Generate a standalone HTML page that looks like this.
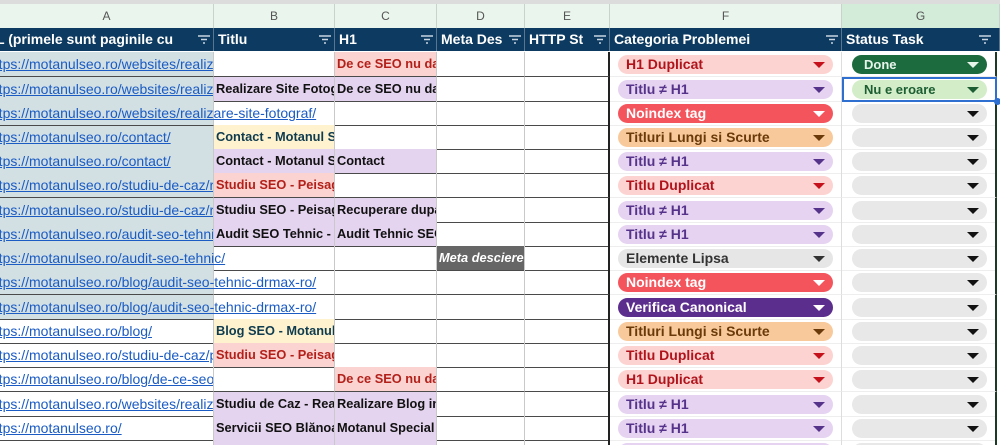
<!DOCTYPE html>
<html><head><meta charset="utf-8"><style>
*{margin:0;padding:0;box-sizing:border-box}
html,body{width:1000px;height:445px;overflow:hidden}
body{background:#fff;font-family:"Liberation Sans",sans-serif;position:relative}
.top{position:absolute;left:0;top:0;width:1000px;height:4px;background:#dcdcdc}
.let{position:absolute;top:4px;height:24px;background:#eaf5ed;border-right:1px solid #c8d3cb;color:#555;font-size:12px;text-align:center;line-height:24px}
.hd{position:absolute;top:28px;height:23px;background:#0d3a60;color:#fff;font-weight:bold;font-size:14px;line-height:23px;padding-left:4px;white-space:nowrap;overflow:hidden;border-right:1px solid #5a7590}
.flt{position:absolute;right:3px;top:7px;width:12px;height:9px}
.r{position:absolute;left:0;width:1000px;height:25px}
.c{position:absolute;top:0;height:25px;border-bottom:1px solid #4a4a4a;border-right:1px solid #c9c9c9;white-space:nowrap;overflow:hidden;font-size:12.8px;font-weight:bold;line-height:24px;padding-left:2px}
.a{left:0;width:214px;font-weight:normal;font-size:14px;color:#1a5bc4;text-decoration:underline;padding-left:0;text-indent:-13px}
.ov{overflow:visible;z-index:2}
.b{left:214px;width:121px}.cc{left:335px;width:102px}.d{left:437px;width:88px}.e{left:525px;width:85px;border-right:2px solid #222}
.f{left:610px;width:232px;border-bottom:1px solid #eee;border-right:1px solid #ddd}
.g{left:842px;width:155px;border-bottom:1px solid #eee;border-right:2px solid #1d3a26}
.t{background:#d2e0e4}
.pu{background:#e5d4f0;color:#111}.pk{background:#fbd4d2;color:#b3201a}.ye{background:#fff3cf;color:#0f3b4f}
.ch{position:absolute;left:8px;top:3px;width:215px;height:19px;border-radius:10px;font-size:14px;font-weight:bold;line-height:19px;padding-left:8px}
.gc{position:absolute;left:10px;top:3px;width:135px;height:19px;border-radius:10px;font-size:13px;font-weight:bold;line-height:19px;padding-left:12px;background:#e8e8e8}
.ch i,.gc i{position:absolute;right:8px;top:7px;width:0;height:0;border-left:6px solid transparent;border-right:6px solid transparent;border-top:6px solid currentColor}
.gc i{color:#111}
.h1d{background:#fcd3d0;color:#b1131c}.h1d i{color:#c4111b}
.tn{background:#e5d3f1;color:#56338a}
.no{background:#f4555d;color:#fff}
.tl{background:#f8c99a;color:#6b3a0b}
.el{background:#e6e6e6;color:#333}
.vc{background:#5b2d8c;color:#fff}
</style></head><body>
<div class="top"></div>
<div class="let" style="left:0;width:214px">A</div>
<div class="let" style="left:214px;width:121px">B</div>
<div class="let" style="left:335px;width:102px">C</div>
<div class="let" style="left:437px;width:88px">D</div>
<div class="let" style="left:525px;width:85px">E</div>
<div class="let" style="left:610px;width:232px">F</div>
<div class="let" style="left:842px;width:158px;background:#d3ecd9">G</div>

<div class="hd" style="left:0;width:214px;text-indent:-8px">L (primele sunt paginile cu<svg class="flt" viewBox="0 0 12 9"><path d="M0 1h12M3 4.5h6M5 8h2" stroke="#c8d4e0" stroke-width="1.5"/></svg></div>
<div class="hd" style="left:214px;width:121px">Titlu<svg class="flt" viewBox="0 0 12 9"><path d="M0 1h12M3 4.5h6M5 8h2" stroke="#c8d4e0" stroke-width="1.5"/></svg></div>
<div class="hd" style="left:335px;width:102px">H1<svg class="flt" viewBox="0 0 12 9"><path d="M0 1h12M3 4.5h6M5 8h2" stroke="#c8d4e0" stroke-width="1.5"/></svg></div>
<div class="hd" style="left:437px;width:88px">Meta Des<svg class="flt" style="background:#0d3a60" viewBox="0 0 12 9"><path d="M0 1h12M3 4.5h6M5 8h2" stroke="#c8d4e0" stroke-width="1.5"/></svg></div>
<div class="hd" style="left:525px;width:85px">HTTP St<svg class="flt" style="background:#0d3a60" viewBox="0 0 12 9"><path d="M0 1h12M3 4.5h6M5 8h2" stroke="#c8d4e0" stroke-width="1.5"/></svg></div>
<div class="hd" style="left:610px;width:232px">Categoria Problemei<svg class="flt" viewBox="0 0 12 9"><path d="M0 1h12M3 4.5h6M5 8h2" stroke="#c8d4e0" stroke-width="1.5"/></svg></div>
<div class="hd" style="left:842px;width:158px">Status Task<svg class="flt" style="right:8px" viewBox="0 0 12 9"><path d="M0 1h12M3 4.5h6M5 8h2" stroke="#c8d4e0" stroke-width="1.5"/></svg></div>

<div class="r" style="top:52px"><div class="c a t">https://motanulseo.ro/websites/realizare-site</div><div class="c b"></div><div class="c cc pk">De ce SEO nu da</div><div class="c d"></div><div class="c e"></div><div class="c f"><div class="ch h1d">H1 Duplicat<i></i></div></div><div class="c g"><div class="gc" style="background:#1c6b3e;color:#e6f4ea">Done<i style="color:#e6f4ea"></i></div></div></div>
<div class="r" style="top:77px"><div class="c a t">https://motanulseo.ro/websites/realizare-site</div><div class="c b pu">Realizare Site Fotograf</div><div class="c cc pu">De ce SEO nu da</div><div class="c d"></div><div class="c e"></div><div class="c f"><div class="ch tn">Titlu ≠ H1<i></i></div></div><div class="c g" style="border:2px solid #2f6fd0;border-right:2px solid #2f6fd0"><div class="gc" style="background:#d3edc8;color:#1c5e32;left:8px;top:1px">Nu e eroare<i style="color:#1c5e32"></i></div></div></div>
<div class="r" style="top:101px"><div class="c a t ov">https://motanulseo.ro/websites/realizare-site-fotograf/</div><div class="c b" style="background:none"></div><div class="c cc"></div><div class="c d"></div><div class="c e"></div><div class="c f"><div class="ch no">Noindex tag<i></i></div></div><div class="c g"><div class="gc"><i></i></div></div></div>
<div class="r" style="top:125px"><div class="c a t">https://motanulseo.ro/contact/</div><div class="c b ye">Contact - Motanul SEO</div><div class="c cc"></div><div class="c d"></div><div class="c e"></div><div class="c f"><div class="ch tl">Titluri Lungi si Scurte<i></i></div></div><div class="c g"><div class="gc"><i></i></div></div></div>
<div class="r" style="top:149px"><div class="c a t">https://motanulseo.ro/contact/</div><div class="c b pu">Contact - Motanul SEO</div><div class="c cc pu">Contact</div><div class="c d"></div><div class="c e"></div><div class="c f"><div class="ch tn">Titlu ≠ H1<i></i></div></div><div class="c g"><div class="gc"><i></i></div></div></div>
<div class="r" style="top:173px"><div class="c a t">https://motanulseo.ro/studiu-de-caz/recuperare</div><div class="c b pk">Studiu SEO - Peisagist</div><div class="c cc"></div><div class="c d"></div><div class="c e"></div><div class="c f"><div class="ch h1d">Titlu Duplicat<i></i></div></div><div class="c g"><div class="gc"><i></i></div></div></div>
<div class="r" style="top:198px"><div class="c a t">https://motanulseo.ro/studiu-de-caz/recuperare</div><div class="c b pu">Studiu SEO - Peisagist</div><div class="c cc pu">Recuperare dupa</div><div class="c d"></div><div class="c e"></div><div class="c f"><div class="ch tn">Titlu ≠ H1<i></i></div></div><div class="c g"><div class="gc"><i></i></div></div></div>
<div class="r" style="top:222px"><div class="c a t">https://motanulseo.ro/audit-seo-tehnic-drmax</div><div class="c b pu">Audit SEO Tehnic - Blog</div><div class="c cc pu">Audit Tehnic SEO</div><div class="c d"></div><div class="c e"></div><div class="c f"><div class="ch tn">Titlu ≠ H1<i></i></div></div><div class="c g"><div class="gc"><i></i></div></div></div>
<div class="r" style="top:246px"><div class="c a t ov">https://motanulseo.ro/audit-seo-tehnic/</div><div class="c b" style="background:none"></div><div class="c cc"></div><div class="c d" style="background:#666;color:#fff;font-style:italic">Meta desciere</div><div class="c e"></div><div class="c f"><div class="ch el">Elemente Lipsa<i></i></div></div><div class="c g"><div class="gc"><i></i></div></div></div>
<div class="r" style="top:270px"><div class="c a t ov">https://motanulseo.ro/blog/audit-seo-tehnic-drmax-ro/</div><div class="c b" style="background:none"></div><div class="c cc"></div><div class="c d"></div><div class="c e"></div><div class="c f"><div class="ch no">Noindex tag<i></i></div></div><div class="c g"><div class="gc"><i></i></div></div></div>
<div class="r" style="top:295px"><div class="c a t ov">https://motanulseo.ro/blog/audit-seo-tehnic-drmax-ro/</div><div class="c b" style="background:none"></div><div class="c cc"></div><div class="c d"></div><div class="c e"></div><div class="c f"><div class="ch vc">Verifica Canonical<i></i></div></div><div class="c g"><div class="gc"><i></i></div></div></div>
<div class="r" style="top:319px"><div class="c a">https://motanulseo.ro/blog/</div><div class="c b ye">Blog SEO - Motanul SEO</div><div class="c cc"></div><div class="c d"></div><div class="c e"></div><div class="c f"><div class="ch tl">Titluri Lungi si Scurte<i></i></div></div><div class="c g"><div class="gc"><i></i></div></div></div>
<div class="r" style="top:343px"><div class="c a">https://motanulseo.ro/studiu-de-caz/peisagist</div><div class="c b pk">Studiu SEO - Peisagist</div><div class="c cc"></div><div class="c d"></div><div class="c e"></div><div class="c f"><div class="ch h1d">Titlu Duplicat<i></i></div></div><div class="c g"><div class="gc"><i></i></div></div></div>
<div class="r" style="top:367px"><div class="c a">https://motanulseo.ro/blog/de-ce-seo-nu-da</div><div class="c b"></div><div class="c cc pk">De ce SEO nu da</div><div class="c d"></div><div class="c e"></div><div class="c f"><div class="ch h1d">H1 Duplicat<i></i></div></div><div class="c g"><div class="gc"><i></i></div></div></div>
<div class="r" style="top:392px"><div class="c a">https://motanulseo.ro/websites/realizare-blog</div><div class="c b pu">Studiu de Caz - Realizare</div><div class="c cc pu">Realizare Blog in</div><div class="c d"></div><div class="c e"></div><div class="c f"><div class="ch tn">Titlu ≠ H1<i></i></div></div><div class="c g"><div class="gc"><i></i></div></div></div>
<div class="r" style="top:416px"><div class="c a">https://motanulseo.ro/</div><div class="c b pu">Servicii SEO Blănoase</div><div class="c cc pu">Motanul Special</div><div class="c d"></div><div class="c e"></div><div class="c f"><div class="ch tn">Titlu ≠ H1<i></i></div></div><div class="c g"><div class="gc"><i></i></div></div></div>
<div class="r" style="top:440px"><div class="c a"></div><div class="c b pu"></div><div class="c cc pu"></div><div class="c d"></div><div class="c e"></div><div class="c f"><div class="ch tn"></div></div><div class="c g"><div class="gc"></div></div></div>
<div style="position:absolute;left:994px;top:98px;width:7px;height:7px;border-radius:50%;background:#2f6fd0"></div>
</body></html>
